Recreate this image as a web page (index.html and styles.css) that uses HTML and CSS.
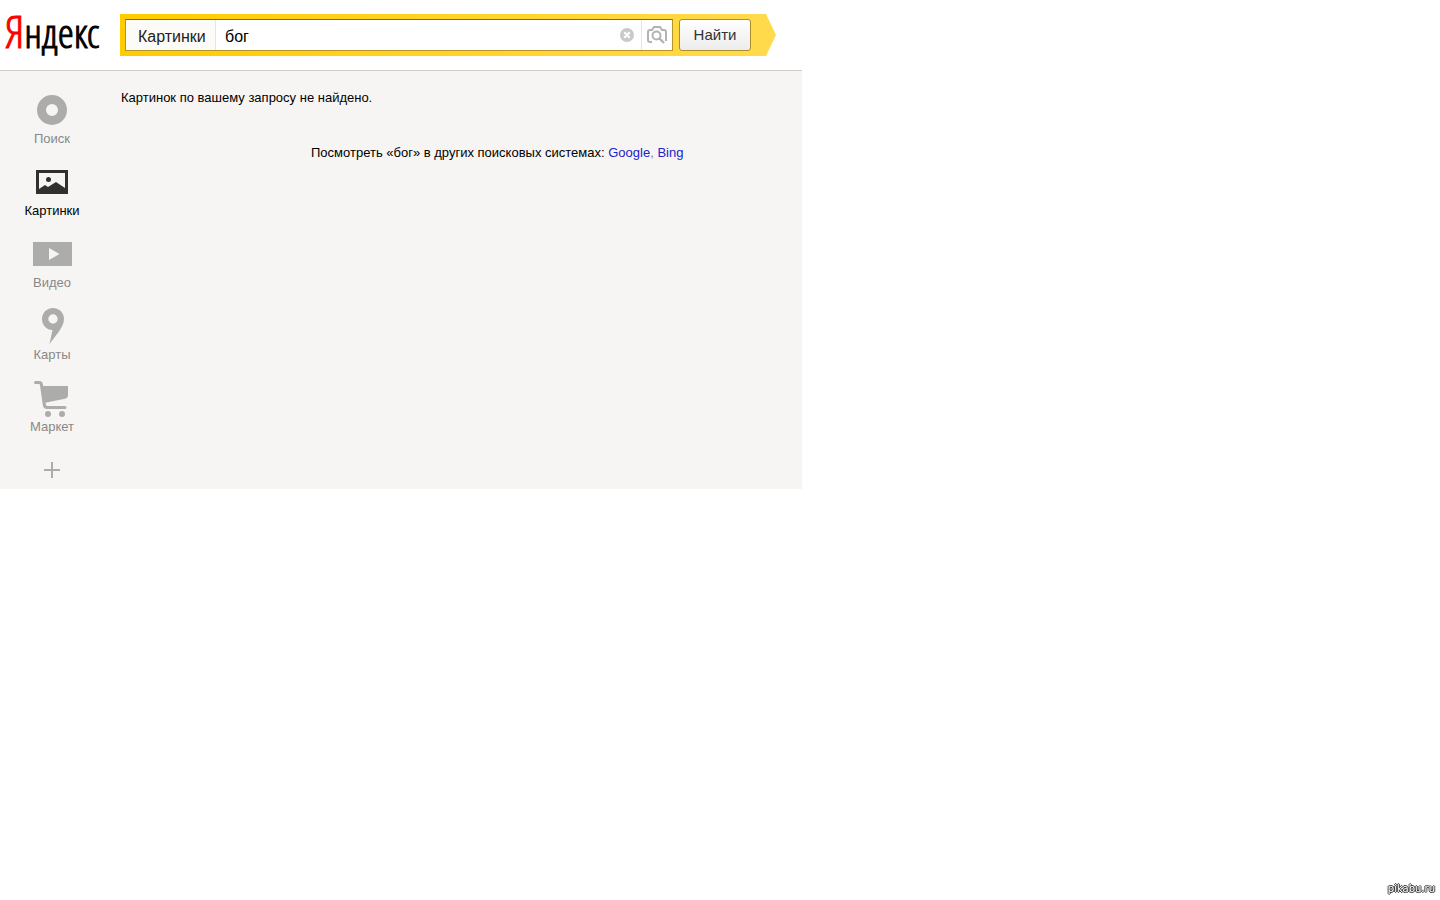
FILE: index.html
```html
<!DOCTYPE html>
<html lang="ru">
<head>
<meta charset="utf-8">
<title>Яндекс.Картинки</title>
<link rel="stylesheet" href="styles.css">
</head>
<body>
<div class="page">
  <header class="header">
    <a class="logo" href="#"><span class="logo-first">Я</span>ндекс</a>
    <form class="search">
      <div class="field">
        <label class="scope" for="query">Картинки</label>
        <input class="query" id="query" type="text" value="бог">
        <button class="clear" type="reset" aria-label="Очистить">
          <svg width="14" height="14" viewBox="0 0 14 14"><circle cx="7" cy="7" r="7" fill="#c9c9c9"/><path d="M4.3 4.3l5.4 5.4M9.7 4.3l-5.4 5.4" stroke="#fff" stroke-width="2.2"/></svg>
        </button>
        <button class="camera" type="button" aria-label="Поиск по картинке">
          <svg width="20" height="18" viewBox="0 0 20 18" fill="none" stroke="#b3b3b3" stroke-width="2"><path d="M5 16H3q-2 0-2-2V6q0-2 2-2h2l2-3h6l2 3h2q2 0 2 2v9"/><circle cx="9.5" cy="9.500" r="4"/><path d="M12.500 12.500l4.500 4.500" stroke-width="2.400"/></svg>
        </button>
      </div>
      <button class="submit" type="submit">Найти</button>
    </form>
  </header>
  <div class="body">
    <nav class="services">
      <a class="service" href="#"><span class="icon"><svg width="30" height="30" viewBox="0 0 30 30"><circle cx="15" cy="15" r="10.500" fill="none" stroke="#acacaa" stroke-width="9"/></svg></span>Поиск</a>
      <a class="service current" href="#"><span class="icon"><svg width="32" height="24" viewBox="0 0 32 24"><path fill="#303030" fill-rule="evenodd" d="M0 0h32v24H0zM3 3v16l6-4 3 2 8-5 9 6V3z"/><circle cx="12.500" cy="9.500" r="2.500" fill="#303030"/></svg></span>Картинки</a>
      <a class="service" href="#"><span class="icon"><svg width="39" height="24" viewBox="0 0 39 24"><path fill="#acacaa" d="M0 0h39v24H0z"/><path fill="#f6f5f3" d="M16 6l10.500 6L16 18z"/></svg></span>Видео</a>
      <a class="service" href="#"><span class="icon"><svg width="24" height="36" viewBox="0 0 24 36"><path fill="#acacaa" fill-rule="evenodd" d="M13 0C6.500 0 2 5 2 11s4.500 11 10.500 11L9.500 36C16 27 24 19 24 11 24 5 19.500 0 13 0zM13 6.300a4.700 4.700 0 1 1 0 9.400a4.700 4.700 0 1 1 0-9.400z"/></svg></span>Карты</a>
      <a class="service" href="#"><span class="icon"><svg width="36" height="38" viewBox="0 -2 36 38"><path fill="none" stroke="#acacaa" stroke-width="3" stroke-linecap="round" stroke-linejoin="round" d="M1.500 1.500H5q2 0 2.400 2L10 22q.5 4.500 3 4.500h18"/><path fill="#acacaa" d="M7.500 5H34v9q0 3-3 3.800L10 22z"/><circle cx="14" cy="33" r="3" fill="#acacaa"/><circle cx="28" cy="33" r="3" fill="#acacaa"/></svg></span>Маркет</a>
      <button class="more" type="button" aria-label="Ещё"><svg width="16" height="16" viewBox="0 0 16 16"><path d="M8 0v16M0 8h16" stroke="#acacaa" stroke-width="2"/></svg></button>
    </nav>
    <main class="results">
      <p class="message">Картинок по вашему запросу не найдено.</p>
      <p class="others">Посмотреть «бог» в других поисковых системах: <a href="#">Google</a><span class="comma">,</span> <a href="#">Bing</a></p>
    </main>
  </div>
</div>
<div class="watermark">pikabu.ru</div>
</body>
</html>
```
FILE: styles.css
```css
* { box-sizing: border-box; }
body {
  margin: 0;
  background: #fff;
  color: #000;
  font: 13px/16px "Liberation Sans", Arial, sans-serif;
}
a { color: #22c; text-decoration: none; }
button { margin: 0; padding: 0; border: 0; background: none; font: inherit; cursor: pointer; }
svg { display: block; }
.page { max-width: 802px; }
.header {
  display: flex;
  align-items: center;
  padding: 14px 26px 14px 0;
  border-bottom: 1px solid #cfcdca;
}
.logo {
  flex: 0 0 120px;
  padding: 0 0 6px 5px;
  color: #000;
  font: 300 41px/36px "Open Sans Condensed Light", "Open Sans Condensed", "Liberation Sans", sans-serif;
  -webkit-text-stroke: 1px currentColor;
  white-space: nowrap;
}
.logo-first { color: #f00; font-size: 45px; line-height: 1px; }
.search {
  flex: 1;
  display: flex;
  gap: 6px;
  min-width: 0;
  padding: 5px 25px 5px 5px;
  background: linear-gradient(90deg, #ffcc00, #ffdb4d);
  clip-path: polygon(0 0, calc(100% - 10px) 0, 100% 50%, calc(100% - 10px) 100%, 0 100%);
}
.field {
  flex: 1;
  display: flex;
  align-items: stretch;
  min-width: 0;
  height: 32px;
  border: 1px solid #b3942b;
  border-top-color: #806a1c;
  background: #fff;
}
.scope {
  flex: 0 0 90px;
  padding: 3px 0 0 12px;
  border-right: 1px solid #e5e5e2;
  background: #fcfbf8;
  color: #222;
  font-size: 16px;
  line-height: 28px;
}
.query {
  flex: 1;
  min-width: 0;
  padding: 3px 9px 0;
  border: 0;
  outline: 0;
  background: none;
  font: 16px/28px "Liberation Sans", Arial, sans-serif;
}
.clear { padding: 0 7px; }
.camera { padding: 0 5px; border-left: 1px solid #e5e5e5; }
.submit {
  flex: 0 0 72px;
  height: 32px;
  border: 1px solid #a98d2e;
  border-radius: 3px;
  background: linear-gradient(#fff, #ececec);
  color: #333;
  font-size: 15px;
}
.body { display: flex; background: #f6f5f3; }
.services {
  flex: 0 0 104px;
  display: flex;
  flex-direction: column;
  align-items: center;
  padding: 19px 0 11px;
}
.service {
  height: 72px;
  color: #888;
  line-height: 18px;
  text-align: center;
}
.icon {
  display: flex;
  align-items: center;
  justify-content: center;
  height: 40px;
}
.service.current { color: #000; }
.more { padding-top: 12px; }
.results { flex: 1; padding: 19px 17px; }
.message { margin: 0; }
.others { margin: 39px 0 0 190px; }
.comma { color: #888; }
.watermark {
  position: fixed;
  right: 5px;
  bottom: 5px;
  color: #fff;
  font: 10px/12px "DejaVu Sans", sans-serif;
  text-shadow: 1px 0 #333, -1px 0 #333, 0 1px #333, 0 -1px #333;
}
```
